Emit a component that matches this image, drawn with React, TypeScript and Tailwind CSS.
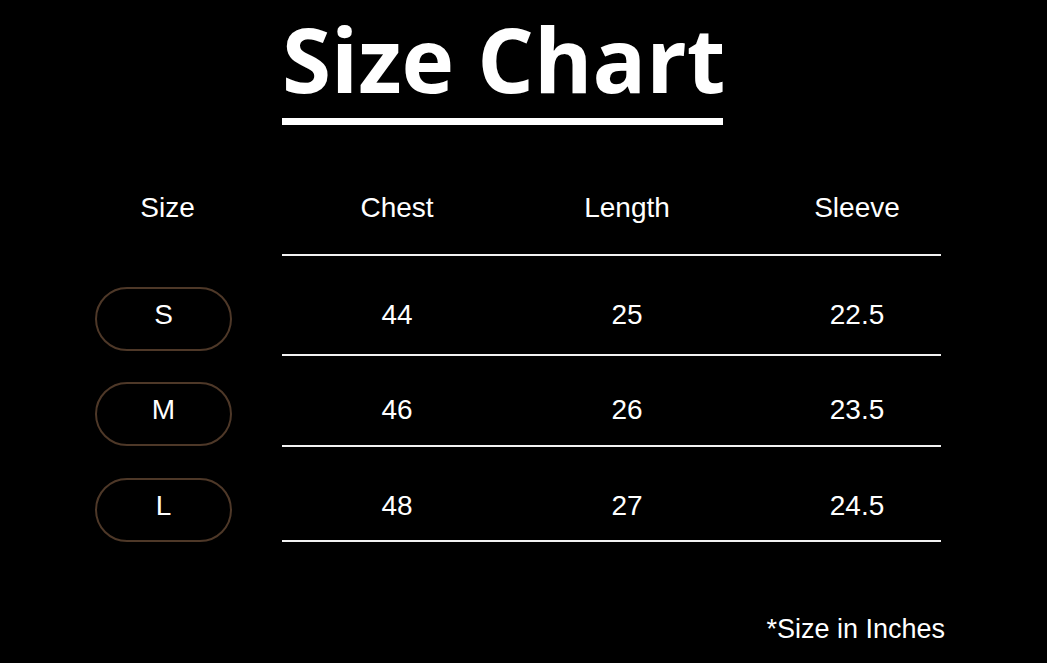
const COLUMNS = ["Chest", "Length", "Sleeve"];

const ROWS = [
  { size: "S", values: ["44", "25", "22.5"], height: "h-[100px]", pillTop: "mt-[31px]", textTop: "pt-[44px]" },
  { size: "M", values: ["46", "26", "23.5"], height: "h-[91px]", pillTop: "mt-[26px]", textTop: "pt-[39px]" },
  { size: "L", values: ["48", "27", "24.5"], height: "h-[95px]", pillTop: "mt-[31px]", textTop: "pt-[44px]" },
];

export default function App() {
  return (
    <div
      className="h-[663px] w-[1047px] overflow-hidden bg-black text-white"
      style={{ fontFamily: '"Liberation Sans", Arial, sans-serif' }}
    >
      {/* title */}
      <div className="pl-[282px] pt-[5px]">
        <h1
          className="inline-block px-[2px] -ml-[2px] text-[89px] font-bold leading-[107px]"
          style={{ fontFamily: '"Open Sans", "Noto Sans", sans-serif' }}
        >
          Size Chart
        </h1>
        <div className="mt-[6px] h-[7px] w-[441px] bg-white" />
      </div>

      {/* table */}
      <div className="mt-[56px] pl-[95px]">
        <div className="flex h-[75px] items-start gap-[50px]">
          <div className="flex w-[137px] justify-center pl-[8px] pt-[12px] text-[28px] leading-[30px]">
            Size
          </div>
          <div className="h-full w-[659px] border-b-2 border-[#f2f2f2]">
            <div className="flex pt-[12px] text-[28px] leading-[30px]">
              {COLUMNS.map((c) => (
                <div key={c} className="w-[230px] shrink-0 text-center">
                  {c}
                </div>
              ))}
            </div>
          </div>
        </div>

        {ROWS.map((row) => (
          <div key={row.size} className={`flex items-start gap-[50px] ${row.height}`}>
            <div
              className={`flex h-[64px] w-[137px] items-center justify-center rounded-full border-2 border-[#4e3828] pb-[8px] text-[28px] leading-[30px] ${row.pillTop}`}
            >
              {row.size}
            </div>
            <div className="h-full w-[659px] border-b-2 border-[#f2f2f2]">
              <div className={`flex text-[28px] leading-[30px] ${row.textTop}`}>
                {row.values.map((v, i) => (
                  <div key={i} className="w-[230px] shrink-0 text-center">
                    {v}
                  </div>
                ))}
              </div>
            </div>
          </div>
        ))}
      </div>

      <div className="mt-[72px] pr-[102px] text-right text-[27px] leading-[30px]">*Size in Inches</div>
    </div>
  );
}
